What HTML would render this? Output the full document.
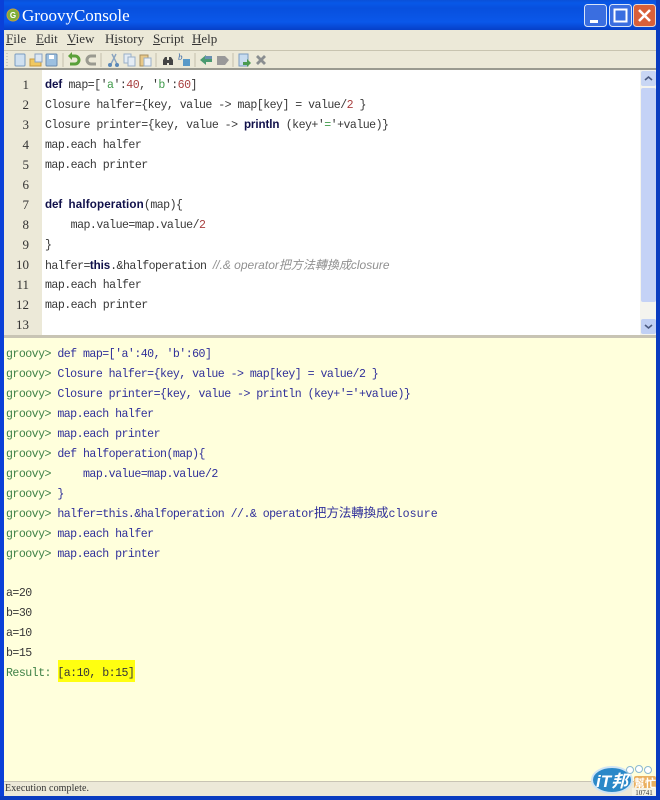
<!DOCTYPE html>
<html><head><meta charset="utf-8">
<style>
html,body{margin:0;padding:0;background:#0a3bd0}
#w{position:relative;width:660px;height:800px;overflow:hidden;background:#ece9d8;font-family:"Liberation Sans",sans-serif;filter:blur(.35px)}
.a{position:absolute}
.l{position:absolute;white-space:pre;font:11.6px/20px "Liberation Mono","Noto Sans CJK TC",monospace;letter-spacing:-.54px;color:#383838;height:20px}
.n{position:absolute;width:29px;text-align:right;left:0;font:13px/20px "Liberation Serif",serif;color:#333}
.b{font:bold 11.6px/20px "Liberation Sans",sans-serif;color:#10104a;letter-spacing:-.1px}
.h{letter-spacing:.15px}
.s{color:#3f9a4a}.d{color:#a84040}
.c{font:italic 12px/20px "Liberation Sans","Noto Sans CJK TC",sans-serif;color:#909090;letter-spacing:0}
.g{color:#3f8248}.u{color:#30309a}
.m{position:absolute;top:31px;font:13px/16px "Liberation Serif",serif;color:#333}
.m u{text-decoration:underline}
</style></head><body><div id="w">
<div class="a" style="left:0;top:0;width:660px;height:30px;background:linear-gradient(#0a50d8 0,#0858e8 3px,#0850de 8px,#0a58ea 22px,#0640c8 30px)"></div>
<div class="a" style="left:0;top:0;width:4px;height:800px;background:#0a40d8"></div>
<div class="a" style="left:656px;top:0;width:4px;height:800px;background:#0a3cc0"></div>
<div class="a" style="left:0;top:796px;width:660px;height:4px;background:#0a3cc0"></div>
<svg class="a" style="left:5px;top:7px" width="16" height="16"><circle cx="8" cy="8" r="6" fill="#7fae3a" stroke="#c8a040"/><text x="8" y="11" font-size="8" font-weight="bold" text-anchor="middle" fill="#fff" font-family="Liberation Sans">G</text></svg>
<div class="a" style="left:22px;top:6px;font:17px/20px 'Liberation Serif',serif;color:#fff">GroovyConsole</div>
<svg class="a" style="left:584px;top:4px" width="72" height="24">
<rect x=".5" y=".5" width="22" height="22" rx="3" fill="#3a6ee0" stroke="#d8e4f8"/><rect x="6" y="16" width="8" height="3" fill="#fff"/>
<rect x="25.5" y=".5" width="22" height="22" rx="3" fill="#3a6ee0" stroke="#d8e4f8"/><rect x="30.5" y="5.5" width="12" height="12" fill="none" stroke="#fff" stroke-width="2"/>
<rect x="49.5" y=".5" width="22" height="22" rx="3" fill="#d8603a" stroke="#e8d8d0"/><path d="M55 6L66 17M66 6L55 17" stroke="#fff" stroke-width="2.6"/>
</svg>
<div class="m" style="left:6px"><u>F</u>ile</div>
<div class="m" style="left:36px"><u>E</u>dit</div>
<div class="m" style="left:67px"><u>V</u>iew</div>
<div class="m" style="left:105px">H<u>i</u>story</div>
<div class="m" style="left:153px"><u>S</u>cript</div>
<div class="m" style="left:192px"><u>H</u>elp</div>
<div class="a" style="left:4px;top:50px;width:652px;height:1px;background:#c8c4b0"></div>
<div class="a" style="left:4px;top:68px;width:652px;height:2px;background:#9a9a90"></div>
<svg class="a" style="left:0;top:50px" width="280" height="20">
<path d="M7 3v14" stroke="#aaa" stroke-dasharray="1 2"/>
<rect x="15" y="4" width="10" height="12" rx="1" fill="#cfe0f0" stroke="#7a9cc0"/>
<rect x="30" y="9" width="11" height="7" fill="#f0c860" stroke="#c89a40"/><rect x="35" y="4" width="7" height="8" fill="#dde8f4" stroke="#8aa4c4"/>
<rect x="46" y="4" width="11" height="12" rx="1" fill="#9cc0e0" stroke="#6a8cb0"/><rect x="49" y="5" width="5" height="4" fill="#fff"/>
<path d="M63 3v14M101 3v14M156 3v14M195 3v14M233 3v14" stroke="#c4c0ac"/>
<path d="M71 6h4a4 4 0 0 1 0 8h-5" fill="none" stroke="#5aa03a" stroke-width="3"/><path d="M72 2l-4 4 4 4z" fill="#5aa03a"/>
<path d="M96 6h-5a4 4 0 0 0 0 8h5" fill="none" stroke="#9a9a90" stroke-width="3"/>
<path d="M110 16l6-12M118 16l-6-12" stroke="#8aa4c0" stroke-width="1.4"/><circle cx="110" cy="15" r="2" fill="#5a88b8"/><circle cx="117" cy="15" r="2" fill="#5a88b8"/>
<rect x="124" y="4" width="7" height="9" fill="#e4ecf4" stroke="#9ab0c8"/><rect x="128" y="7" width="7" height="9" fill="#e4ecf4" stroke="#9ab0c8"/>
<rect x="140" y="5" width="8" height="11" fill="#e8c888" stroke="#a89060"/><rect x="144" y="8" width="7" height="8" fill="#eef2f6" stroke="#9ab0c8"/>
<path d="M163 15v-5l2-3h2v3h2v-3h2l2 3v5h-4v-2h-2v2z" fill="#444"/>
<text x="178" y="10" font-size="9" font-style="italic" fill="#3a6aa8" font-family="Liberation Serif">b</text><rect x="183" y="9" width="7" height="7" fill="#5a9ac8"/>
<path d="M200 10l6-5v3h6v4h-6v3z" fill="#4a9a70"/><rect x="205" y="6" width="7" height="3" fill="#6a90b0"/>
<path d="M217 6h8l4 4-4 5h-8z" fill="#999"/>
<rect x="239" y="4" width="9" height="12" fill="#c8dcf0" stroke="#7a9cc0"/><path d="M243 12h4v-3l4 4-4 4v-2h-4z" fill="#4a9a50"/>
<path d="M257 6l8 8M265 6l-8 8" stroke="#8a8e90" stroke-width="2.8"/>
</svg>
<div class="a" style="left:4px;top:70px;width:636px;height:265px;background:#fff"></div>
<div class="a" style="left:4px;top:70px;width:38px;height:265px;background:#ece9d8"></div>
<div class="a" style="left:640px;top:70px;width:16px;height:265px;background:#f4f4ee"></div>
<div class="a" style="left:641px;top:71px;width:15px;height:15px;background:#c8d6f4;border-radius:2px"></div>
<div class="a" style="left:641px;top:88px;width:15px;height:214px;background:#c4d2f6;border-radius:2px"></div>
<div class="a" style="left:641px;top:319px;width:15px;height:15px;background:#c0d0f4;border-radius:2px"></div>
<svg class="a" style="left:641px;top:71px" width="15" height="264"><path d="M4 9l3.500-3 3.500 3M4 254l3.500 3 3.500-3" fill="none" stroke="#4a5a80" stroke-width="1.600"/></svg>
<div class="a" style="left:4px;top:335px;width:652px;height:3px;background:#c8c4b4"></div>
<div class="a" style="left:4px;top:338px;width:652px;height:443px;background:#ffffdc"></div>
<div class="a" style="left:4px;top:781px;width:652px;height:15px;background:#ece9d8;border-top:1px solid #c8c4b4;box-sizing:border-box"></div>
<div class="a" style="left:5px;top:782px;font:10px/14px 'Liberation Serif',serif;color:#333;letter-spacing:.1px">Execution complete.</div>

<div class="n" style="top:75px">1</div><div class="n" style="top:95px">2</div><div class="n" style="top:115px">3</div><div class="n" style="top:135px">4</div><div class="n" style="top:155px">5</div><div class="n" style="top:175px">6</div><div class="n" style="top:195px">7</div><div class="n" style="top:215px">8</div><div class="n" style="top:235px">9</div><div class="n" style="top:255px">10</div><div class="n" style="top:275px">11</div><div class="n" style="top:295px">12</div><div class="n" style="top:315px">13</div>

<div class="l" style="left:45px;top:75px"><span class="b">def</span> map=['<span class="s">a</span>':<span class="d">40</span>, '<span class="s">b</span>':<span class="d">60</span>]</div>
<div class="l" style="left:45px;top:96px">Closure halfer={key, value -&gt; map[key] = value/<span class="d">2</span> }</div>
<div class="l" style="left:45px;top:115px">Closure printer={key, value -&gt; <span class="b">println</span> (key+'<span class="s">=</span>'+value)}</div>
<div class="l" style="left:45px;top:136px">map.each halfer</div>
<div class="l" style="left:45px;top:156px">map.each printer</div>
<div class="l" style="left:45px;top:195px"><span class="b">def</span> <span class="b h">halfoperation</span>(map){</div>
<div class="l" style="left:45px;top:216px">    map.value=map.value/<span class="d">2</span></div>
<div class="l" style="left:45px;top:236px">}</div>
<div class="l" style="left:45px;top:255px">halfer=<span class="b">this</span>.&amp;halfoperation <span class="c">//.&amp; operator把方法轉換成closure</span></div>
<div class="l" style="left:45px;top:276px">map.each halfer</div>
<div class="l" style="left:45px;top:296px">map.each printer</div>

<div class="l" style="left:6px;top:345px"><span class="g">groovy&gt;</span> <span class="u">def map=['a':40, 'b':60]</span></div>
<div class="l" style="left:6px;top:365px"><span class="g">groovy&gt;</span> <span class="u">Closure halfer={key, value -&gt; map[key] = value/2 }</span></div>
<div class="l" style="left:6px;top:385px"><span class="g">groovy&gt;</span> <span class="u">Closure printer={key, value -&gt; println (key+'='+value)}</span></div>
<div class="l" style="left:6px;top:405px"><span class="g">groovy&gt;</span> <span class="u">map.each halfer</span></div>
<div class="l" style="left:6px;top:425px"><span class="g">groovy&gt;</span> <span class="u">map.each printer</span></div>
<div class="l" style="left:6px;top:445px"><span class="g">groovy&gt;</span> <span class="u">def halfoperation(map){</span></div>
<div class="l" style="left:6px;top:465px"><span class="g">groovy&gt;</span> <span class="u">    map.value=map.value/2</span></div>
<div class="l" style="left:6px;top:485px"><span class="g">groovy&gt;</span> <span class="u">}</span></div>
<div class="l" style="left:6px;top:504px"><span class="g">groovy&gt;</span> <span class="u">halfer=this.&amp;halfoperation //.&amp; operator<span style="letter-spacing:-.1px;font-size:12.500px">把方法轉換成</span><span style="letter-spacing:.1px">closure</span></span></div>
<div class="l" style="left:6px;top:525px"><span class="g">groovy&gt;</span> <span class="u">map.each halfer</span></div>
<div class="l" style="left:6px;top:545px"><span class="g">groovy&gt;</span> <span class="u">map.each printer</span></div>
<div class="l" style="left:6px;top:584px">a=20</div>
<div class="l" style="left:6px;top:604px">b=30</div>
<div class="l" style="left:6px;top:624px">a=10</div>
<div class="l" style="left:6px;top:644px">b=15</div>
<div class="a" style="left:58px;top:660px;width:77px;height:22px;background:#ffff10"></div>
<div class="l" style="left:6px;top:664px"><span class="g">Result:</span> [a:10, b:15]</div>

<svg class="a" style="left:590px;top:762px" width="70" height="38">
<rect x="42" y="26" width="24" height="8" fill="#f4f2e4"/>
<ellipse cx="22" cy="18" rx="20" ry="13" fill="#2a88c8" stroke="#cfe4f4" stroke-width="2"/>
<text x="6" y="25" font-size="17" font-weight="bold" font-style="italic" fill="#fff" font-family="Liberation Sans,Noto Sans CJK TC">iT邦</text>
<circle cx="40" cy="8" r="3.500" fill="#fff" stroke="#8ab8d0"/><circle cx="49" cy="7" r="3.500" fill="#fff" stroke="#8ab8d0"/><circle cx="58" cy="8" r="3.500" fill="#fff" stroke="#8ab8d0"/>
<rect x="44" y="14" width="22" height="12" rx="2" fill="#eab060"/>
<text x="44" y="25" font-size="11" font-weight="bold" fill="#fff" font-family="Noto Sans CJK TC">幫忙</text>
<text x="54" y="33" font-size="7" text-anchor="middle" fill="#333" font-family="Liberation Serif">10741</text>
</svg>
</div></body></html>
